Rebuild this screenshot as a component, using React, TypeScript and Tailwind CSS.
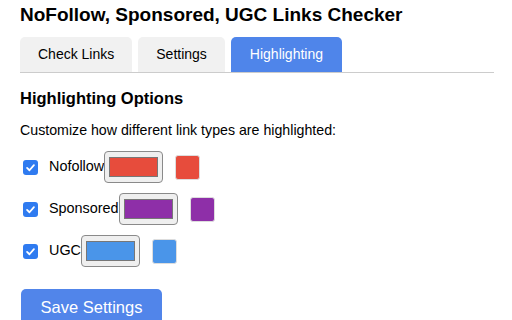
import React, { useState } from 'react';

type LinkType = {
  id: string;
  label: string;
  color: string;
};

const linkTypes: LinkType[] = [
  { id: 'nofollow', label: 'Nofollow', color: '#e74c3c' },
  { id: 'sponsored', label: 'Sponsored', color: '#8e2fa8' },
  { id: 'ugc', label: 'UGC', color: '#4a95e9' },
];

const tabs = ['Check Links', 'Settings', 'Highlighting'];

function Checkbox({ checked, onChange }: { checked: boolean; onChange: () => void }) {
  return (
    <button
      onClick={onChange}
      className={`w-[15px] h-[15px] rounded-[3px] flex items-center justify-center shrink-0 ${
        checked ? 'bg-[#2f7bf0]' : 'bg-white border border-[#767676]'
      }`}
    >
      {checked && (
        <svg viewBox="0 0 16 16" className="w-[11px] h-[11px]">
          <path d="M3 8.5 L6.5 12 L13 4.5" fill="none" stroke="white" strokeWidth="2.6" strokeLinecap="round" strokeLinejoin="round" />
        </svg>
      )}
    </button>
  );
}

export default function App() {
  const [active, setActive] = useState('Highlighting');
  const [enabled, setEnabled] = useState<Record<string, boolean>>({ nofollow: true, sponsored: true, ugc: true });

  return (
    <div className="w-[512px] h-[320px] overflow-hidden bg-white text-black font-['Liberation_Sans',Arial,sans-serif] px-[20px] pt-[3px]">
      <h1 className="text-[19px] font-bold leading-[23px]">NoFollow, Sponsored, UGC Links Checker</h1>

      <div className="mt-[11px] flex gap-[6px] border-b border-[#cccccc] w-[474px]">
        {tabs.map((tab) => (
          <button
            key={tab}
            onClick={() => setActive(tab)}
            className={`h-[35px] px-[18px] rounded-t-[5px] text-[14px] ${
              active === tab ? 'bg-[#4f85ea] text-white px-[19px]' : 'bg-[#f1f1f1] text-black'
            }`}
          >
            {tab}
          </button>
        ))}
      </div>

      <h2 className="mt-[15px] text-[16.5px] font-bold leading-[20px]">Highlighting Options</h2>
      <p className="mt-[13px] text-[14.2px] leading-[18px]">Customize how different link types are highlighted:</p>

      <div className="mt-[12px] flex flex-col gap-[10px] pl-[3px]">
        {linkTypes.map((t) => (
          <div key={t.id} className="flex items-center h-[32px]">
            <Checkbox
              checked={enabled[t.id]}
              onChange={() => setEnabled((prev) => ({ ...prev, [t.id]: !prev[t.id] }))}
            />
            <span className="ml-[11px] text-[14.4px]">{t.label}</span>
            <div className="w-[59px] h-[32px] rounded-[4px] border border-[#8a8a8a] bg-[#efefef] flex items-center justify-center">
              <div className="w-[49px] h-[20px] border border-[#777777]" style={{ backgroundColor: t.color }} />
            </div>
            <div className="ml-[12px] w-[25px] h-[25px] rounded-[3px] border border-[#dddddd]" style={{ backgroundColor: t.color }} />
          </div>
        ))}
      </div>

      <button className="mt-[22px] ml-px w-[141px] h-[40px] rounded-[5px] bg-[#5185ea] text-white text-[16.5px] pb-[4px]">
        Save Settings
      </button>
    </div>
  );
}
